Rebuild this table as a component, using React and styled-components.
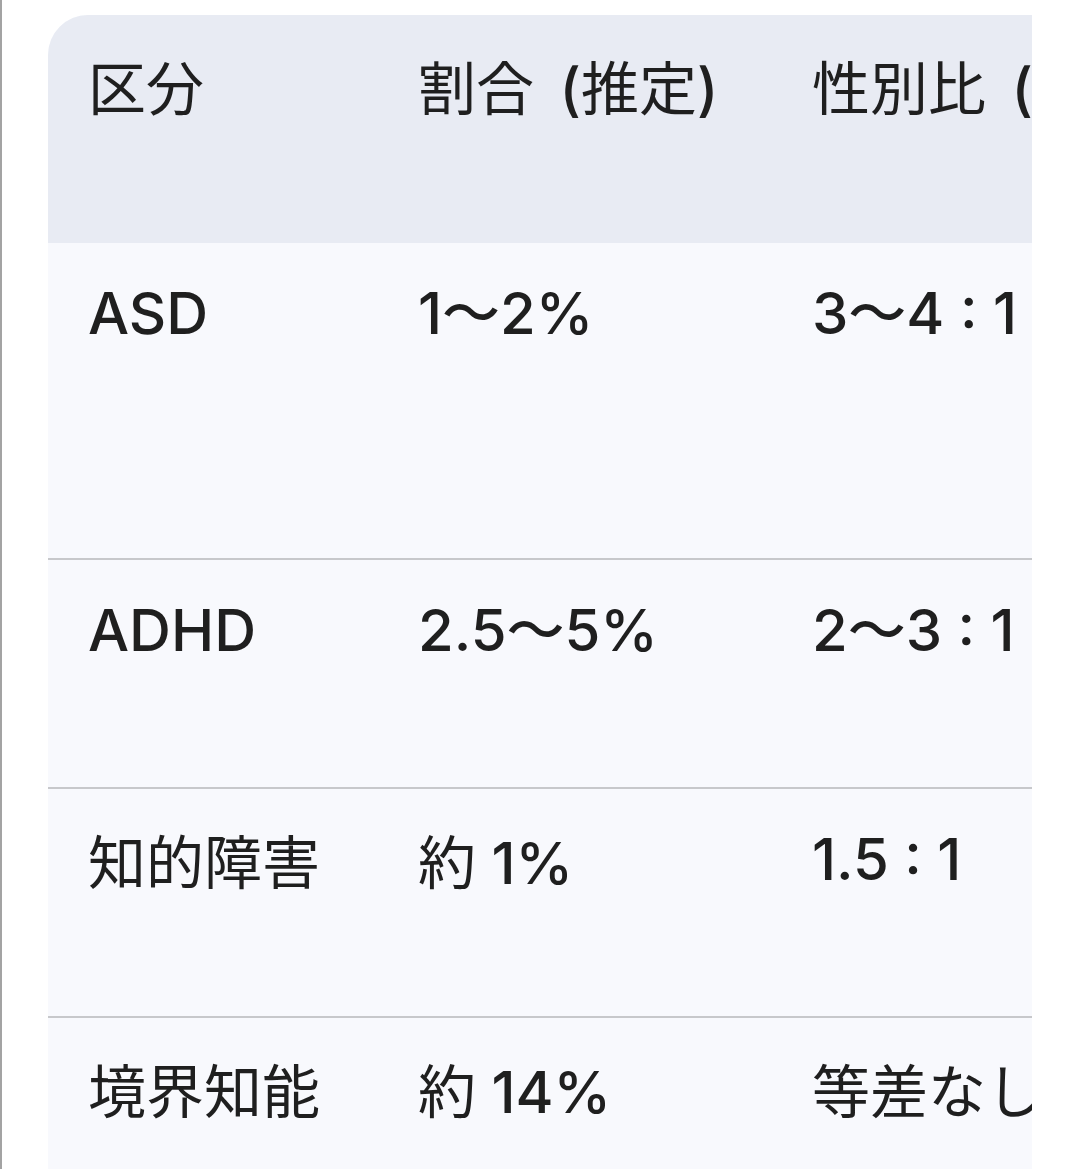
import React from "react";
import styled, { createGlobalStyle } from "styled-components";

const GlobalStyle = createGlobalStyle`
  html, body {
    margin: 0;
    padding: 0;
    background: #ffffff;
  }
  body {
    font-family: Inter, "Noto Sans CJK JP", sans-serif;
    color: #1f1f1f;
  }
`;

const Frame = styled.div`
  min-height: 100vh;
  box-sizing: border-box;
  border-left: 2px solid #a3a3a3;
  padding: 15px 48px 0 46px;
`;

const TableWrap = styled.div`
  overflow: hidden;
  border-top-left-radius: 40px;
  background: #f8f9fd;
`;

const Row = styled.div`
  display: flex;
  box-sizing: border-box;
  height: ${(p) => p.$height}px;
  background: ${(p) => (p.$head ? "#e8ebf3" : "#f8f9fd")};
  border-top: ${(p) => (p.$line ? "2px solid #c7c8cb" : "none")};
`;

const Cell = styled.div`
  flex: 0 0 ${(p) => p.$width}px;
  box-sizing: border-box;
  padding: 27px 0 0 40px;
  font-size: 58px;
  line-height: 87px;
  font-weight: 500;
  white-space: nowrap;
`;

const Han = styled.span`
  font-family: "Noto Sans CJK JP", sans-serif;
  font-weight: 400;
`;

// parenthesised part of a header, sits a little further from the word
const Note = styled.span`
  margin-left: 10px;
`;

const widths = [330, 394, 600];

const head = [
  <Han>区分</Han>,
  <><Han>割合</Han> <Note>(<Han>推定</Han>)</Note></>,
  <><Han>性別比</Han> <Note>(<Han>男</Han>:<Han>女</Han>)</Note></>,
];

const rows = [
  { h: 315, cells: ["ASD", "1〜2%", "3〜4 : 1"] },
  { h: 229, line: true, cells: ["ADHD", "2.5〜5%", "2〜3 : 1"] },
  { h: 229, line: true, cells: [<Han>知的障害</Han>, <><Han>約</Han> 1%</>, "1.5 : 1"] },
  { h: 229, line: true, cells: [<Han>境界知能</Han>, <><Han>約</Han> 14%</>, <Han>等差なし</Han>] },
];

export default function App() {
  return (
    <Frame>
      <GlobalStyle />
      <TableWrap>
        <Row $head $height={228}>
          {head.map((c, i) => (
            <Cell key={i} $width={widths[i]}>{c}</Cell>
          ))}
        </Row>
        {rows.map((r, ri) => (
          <Row key={ri} $height={r.h} $line={r.line}>
            {r.cells.map((c, i) => (
              <Cell key={i} $width={widths[i]}>{c}</Cell>
            ))}
          </Row>
        ))}
      </TableWrap>
    </Frame>
  );
}
